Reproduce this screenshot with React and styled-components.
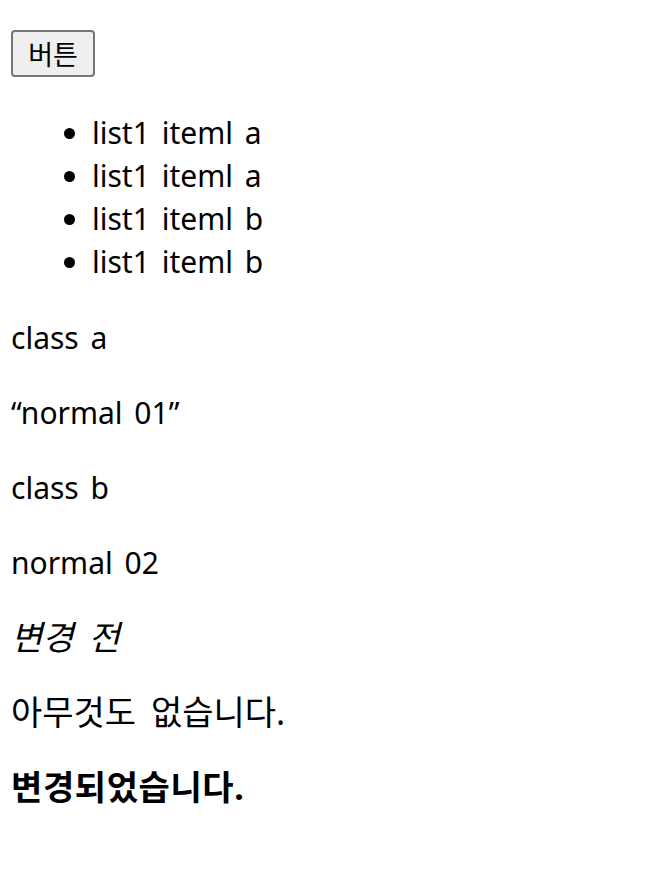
import React from "react";
import styled, { createGlobalStyle } from "styled-components";

const GlobalStyle = createGlobalStyle`
  body {
    margin: 0;
    background: #ffffff;
    color: #000000;
    font-family: "Noto Sans", "Noto Sans CJK KR", sans-serif;
  }
`;

const items = ["list1 iteml a", "list1 iteml a", "list1 iteml b", "list1 iteml b"];

const App = () => {
  return (
    <Container>
      <GlobalStyle />
      <Top>
        <Button type="button">버튼</Button>
      </Top>
      <List>
        {items.map((item, i) => (
          <Item key={i}>{item}</Item>
        ))}
      </List>
      <Text>class a</Text>
      <Text>“normal 01”</Text>
      <Text>class b</Text>
      <Text>normal 02</Text>
      <Text korean italic>변경 전</Text>
      <Text korean>아무것도 없습니다.</Text>
      <Text korean bold>변경되었습니다.</Text>
    </Container>
  );
};

const Container = styled.div`
  padding: 30px 11px;
  font-size: 30px;
  line-height: 43px;
  word-spacing: 4px;
`;

const Top = styled.div`
  display: flex;
  margin-bottom: 34px;
`;

const Button = styled.button`
  height: 47px;
  width: 84px;
  padding: 0;
  font-family: "Noto Sans CJK KR", sans-serif;
  font-size: 27px;
  color: #000000;
  background-color: #efefef;
  border: 2px solid #767676;
  border-radius: 4px;
`;

const List = styled.ul`
  margin: 0 0 33px;
  padding-left: 81px;
  list-style: disc;
`;

const Item = styled.li`
  line-height: 43px;
`;

const Text = styled.p`
  margin: 0 0 32px;
  font-size: ${(p) => (p.korean ? "34px" : "30px")};
  font-style: ${(p) => (p.italic ? "italic" : "normal")};
  font-weight: ${(p) => (p.bold ? 700 : 400)};
  word-spacing: ${(p) => (p.korean ? "6px" : "4px")};
  letter-spacing: ${(p) => (p.bold ? "0.6px" : "0")};
`;

export default App;
